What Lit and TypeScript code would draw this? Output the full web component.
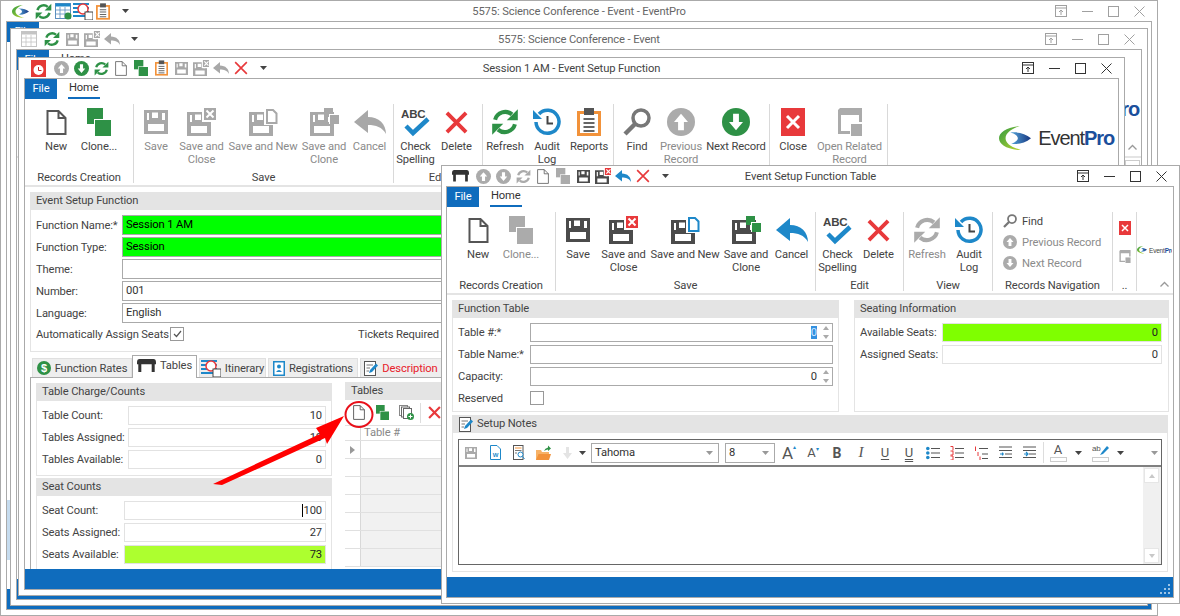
import { LitElement, html, css, svg } from 'lit';
import { customElement } from 'lit/decorators.js';

// palette used by the icons
const DARK = '#4b4b4b';
const GRAY = '#a8a8a8';
const GREEN = '#2e9146';
const BLUE = '#1e88c9';
const RED = '#e8393b';
const ORANGE = '#f2923a';

const ic = (w: number, h: number, vb: string, body: unknown) =>
  html`<svg class="ic" width=${w} height=${h} viewBox=${vb}>${body}</svg>`;

const floppyBody = (c: string) =>
  svg`<path fill=${c} fill-rule="evenodd" d="M0 0H24V24H0Z M3 3H5V10H3Z M8 2.500H14V8H8Z M18 3H21V10H18Z M4 14H20V21H4Z"/>`;

const floppy = (s: number, c: string) => ic(s, s, '0 0 24 24', floppyBody(c));

const saveClose = (s: number, c: string, mark: string) =>
  ic((s * 29) / 24, (s * 28) / 24, '0 0 29 28', svg`
    <g transform="translate(0 4)">${floppyBody(c)}</g>
    <rect x="15" y="0" width="14" height="14" fill="#fff"/>
    <rect x="17" y="0" width="12" height="12" fill=${mark}/>
    <path d="M19.500 2.500l7 7m0-7l-7 7" stroke="#fff" stroke-width="2"/>`);

const saveNew = (s: number, c: string, mark: string) =>
  ic((s * 29) / 24, (s * 28) / 24, '0 0 29 28', svg`
    <g transform="translate(0 4)">${floppyBody(c)}</g>
    <rect x="15" y="0" width="14" height="17" fill="#fff"/>
    <path d="M18 2H24L27.500 5.500V15H18Z" fill="#fff" stroke=${mark} stroke-width="2"/>`);

const saveClone = (s: number, c: string, mark: string) =>
  ic((s * 29) / 24, (s * 28) / 24, '0 0 29 28', svg`
    <g transform="translate(0 4)">${floppyBody(c)}</g>
    <rect x="14" y="0" width="9" height="9" fill=${mark}/>
    <rect x="19" y="6" width="10" height="10" fill="#fff"/>
    <rect x="20" y="7" width="9" height="9" fill=${mark}/>`);

const doc = (w: number, h: number, c: string, sw = 2) =>
  ic(w, h, '0 0 20 25', svg`<path d="M1 1H12L19 8V24H1Z M12 1V8H19" fill="#fff" stroke=${c} stroke-width=${sw}/>`);

const clone = (s: number, c: string) =>
  ic(s, (s * 28) / 24, '0 0 24 28', svg`
    <rect x="0" y="0" width="16" height="16" fill=${c}/>
    <rect x="7" y="11" width="17" height="17" fill="#fff"/>
    <rect x="8" y="12" width="16" height="16" fill=${c}/>`);

const undo = (w: number, c: string) =>
  ic(w, (w * 24) / 32, '0 0 32 24', svg`<path fill=${c} d="M0 12L14 0V7C25 7 32 14 32 24C28 17 22 15 14 15V23Z"/>`);

const cross = (s: number, c: string, sw = 4) =>
  ic(s, s, '0 0 24 24', svg`<path d="M2 2L22 22M22 2L2 22" stroke=${c} stroke-width=${sw} fill="none"/>`);

const check = (s: number) =>
  ic(s, s, '0 0 30 30', svg`
    <text x="0" y="11" font-family="Liberation Sans, sans-serif" font-weight="700" font-size="11.500" fill="#444">ABC</text>
    <path d="M5 19L12 26L27 12" stroke=${BLUE} stroke-width="4.500" fill="none"/>`);

const refresh = (s: number, c: string, c2 = c) =>
  ic(s, s, '0 0 24 24', svg`
    <path d="M3.500 10A9 9 0 0 1 18 5.500" fill="none" stroke=${c} stroke-width="3.500"/>
    <path d="M23 1V10.500H13.500Z" fill=${c}/>
    <path d="M20.500 14A9 9 0 0 1 6 18.500" fill="none" stroke=${c2} stroke-width="3.500"/>
    <path d="M1 23V13.500H10.500Z" fill=${c2}/>`);

const audit = (s: number) =>
  ic(s, s, '0 0 28 28', svg`
    <path d="M6 6A11.500 11.500 0 1 1 3 14" fill="none" stroke=${BLUE} stroke-width="3.500"/>
    <path d="M0 2V11H9Z" fill=${BLUE}/>
    <path d="M14.500 8V15.500H20" fill="none" stroke="#444" stroke-width="2"/>`);

const clipboard = (w: number, h: number) =>
  ic(w, h, '0 0 24 28', svg`
    <rect x="1.500" y="4.500" width="21" height="22" fill="#fff" stroke=${ORANGE} stroke-width="3"/>
    <rect x="7" y="0" width="10" height="7" fill="#555"/>
    <path d="M6.500 11H17.500M6.500 15H17.500M6.500 19H17.500M6.500 23H17.500" stroke="#666" stroke-width="1.800"/>`);

const find = (s: number, c: string) =>
  ic(s, s, '0 0 28 28', svg`
    <circle cx="18" cy="10" r="8" fill="none" stroke=${c} stroke-width="3.500"/>
    <path d="M12 16L2 26" stroke=${c} stroke-width="4.500"/>`);

const arrowDot = (s: number, c: string, down: boolean) =>
  ic(s, s, '0 0 24 24', svg`
    <circle cx="12" cy="12" r="12" fill=${c}/>
    <path transform=${down ? 'rotate(180 12 12)' : ''} d="M12 5L18 12H14.500V19H9.500V12H6Z" fill="#fff"/>`);

const closeBox = (w: number, h: number) =>
  ic(w, h, '0 0 24 28', svg`
    <rect width="24" height="28" fill=${RED}/>
    <path d="M6 8L18 20M18 8L6 20" stroke="#fff" stroke-width="3"/>`);

const related = (w: number, h: number, c: string) =>
  ic(w, h, '0 0 24 28', svg`
    <path d="M1.500 1.500H22.500V14 M1.500 1.500V24.500H12" fill="none" stroke=${c} stroke-width="3"/>
    <rect x="1" y="1" width="22" height="6" fill=${c}/>
    <rect x="13" y="16" width="11" height="12" fill=${c}/>`);

const table = (w: number, c: string) =>
  ic(w, (w * 15) / 22, '0 0 22 15', svg`
    <path d="M3 0H19Q22 0 22 4V6H0V4Q0 0 3 0Z M1.500 6H5V15H1.500Z M17 6H20.500V15H17Z" fill=${c}/>`);

const logoMark = (w: number, id: string) =>
  ic(w, (w * 26) / 34, '0 0 34 26', svg`
    <defs>
      <linearGradient id="g${id}" x1="0" x2="1" y1="0" y2="1"><stop offset="0" stop-color="#2f9a42"/><stop offset="1" stop-color="#c3d82f"/></linearGradient>
      <linearGradient id="b${id}" x1="0" x2="1"><stop offset="0" stop-color="#56a8dc"/><stop offset="1" stop-color="#16357f"/></linearGradient>
    </defs>
    <path fill="url(#g${id})" d="M22 0C8 1 0 7 0 13C0 20 9 25 25 26C14 23 7 19 7 13C7 8 13 3 22 0Z"/>
    <path fill="url(#b${id})" d="M12 7C20 6 28 8 34 13C28 18 20 20 13 19C18 17 20 15 20 13C20 11 17 8 12 7Z"/>`);

const chevron = () =>
  ic(9, 6, '0 0 9 6', svg`<path d="M.5 5.500L4.500 1.500L8.500 5.500" fill="none" stroke="#999" stroke-width="1.300"/>`);

const caret = () => ic(7, 4, '0 0 7 4', svg`<path d="M0 0H7L3.500 4Z" fill="#444"/>`);

// small icons that only show up in the quick access bars, tabs and the notes toolbar
const alarm = () =>
  ic(15, 17, '0 0 15 17', svg`
    <rect width="15" height="17" fill="#e53935"/>
    <circle cx="7.500" cy="10" r="5" fill="#fff"/>
    <path d="M7.500 7V10.500H10.500" stroke="#c62828" fill="none"/>`);

const calendarGrid = (c: string, dot?: string) =>
  ic(17, 17, '0 0 17 17', svg`
    <rect x=".5" y=".5" width="15" height="15" fill="#fff" stroke=${c}/>
    <rect x=".5" y=".5" width="15" height="3" fill=${dot ? BLUE : c}/>
    <path d="M5 4V15M10 4V15M1 7H15M1 11H15" stroke=${c} stroke-width=".8"/>
    ${dot ? svg`<circle cx="13" cy="13" r="3.500" fill=${dot}/>` : null}`);

const schedule = () =>
  ic(20, 18, '0 0 20 18', svg`
    <path d="M0 2H16M0 6H16M0 10H16M0 14H16" stroke=${BLUE} stroke-width="2"/>
    <circle cx="10" cy="7" r="5" fill="#fff" stroke=${RED} stroke-width="1.500"/>
    <rect x="12" y="10" width="8" height="8" fill="#fff" stroke="#444"/>`);

const dollar = () =>
  ic(14, 14, '0 0 14 14', svg`
    <circle cx="7" cy="7" r="7" fill=${GREEN}/>
    <text x="7" y="11" text-anchor="middle" font-family="Liberation Sans, sans-serif" font-weight="700" font-size="11" fill="#fff">$</text>`);

const idCard = () =>
  ic(12, 15, '0 0 12 15', svg`
    <rect x=".75" y=".75" width="10.500" height="13.500" fill="#fff" stroke=${BLUE} stroke-width="1.500"/>
    <circle cx="6" cy="5.500" r="2" fill=${BLUE}/>
    <path d="M3 11Q6 7 9 11Z" fill=${BLUE}/>`);

const notePen = () =>
  ic(14, 15, '0 0 14 15', svg`
    <rect x=".5" y=".5" width="11" height="14" fill="#fff" stroke="#555"/>
    <path d="M2.500 4H9M2.500 7H6M2.500 10H5" stroke="#777"/>
    <path d="M5 12L6 9L12 2.500L14 4.500L8 11Z" fill=${BLUE}/>`);

const copyAdd = () =>
  ic(15, 15, '0 0 15 15', svg`
    <rect x=".5" y=".5" width="8" height="10" fill="#fff" stroke="#888"/>
    <rect x="2.500" y="2" width="8" height="10" fill="#fff" stroke="#666"/>
    <rect x="4.500" y="3.500" width="8" height="10" fill="#fff" stroke="#666"/>
    <circle cx="11.500" cy="11.500" r="3.500" fill=${GREEN}/>
    <path d="M9.500 11.500H13.500M11.500 9.500V13.500" stroke="#fff"/>`);

const wordDoc = () =>
  ic(11, 15, '0 0 11 15', svg`
    <path d="M.5 .5H7L10.500 4V14.500H.5Z" fill="#fff" stroke=${BLUE}/>
    <text x="5.500" y="11.500" text-anchor="middle" font-family="Liberation Sans, sans-serif" font-weight="700" font-size="6" fill=${BLUE}>W</text>`);

const findDoc = () =>
  ic(12, 15, '0 0 12 15', svg`
    <rect x=".5" y=".5" width="9.500" height="14" fill="#fff" stroke="#555"/>
    <path d="M2 3H8.500" stroke=${ORANGE}/>
    <path d="M2 5.500H8.500M2 8H4" stroke="#777"/>
    <circle cx="7.500" cy="9.500" r="2.500" fill="#fff" stroke=${BLUE}/>
    <path d="M9.500 11.500L11.500 14" stroke=${BLUE}/>`);

const openFolder = () =>
  ic(15, 15, '0 0 15 15', svg`
    <path d="M0 5H5L6 7H13V15H0Z" fill="#f7b267"/>
    <path d="M2.500 9H15L13 15H0Z" fill=${ORANGE}/>
    <path d="M8 6Q9 3 12 2.500V0.500L15 3.500L12 6V4.500Q10 4.500 8 6Z" fill=${GREEN}/>`);

const fontSize = (big: boolean) =>
  html`<span class="fs ${big ? 'big' : ''}">A<i>${big ? '▴' : '▾'}</i></span>`;

const list = (marks: unknown) => ic(14, 14, '0 0 14 14', marks);

const indentIcon = (mark: string) =>
  ic(13, 13, '0 0 13 13', svg`
    <path d="M0 1H13M0 4.500H13M6 8H13M0 11.500H13" stroke="#555" stroke-width="1.200"/>
    <path d=${mark} stroke=${BLUE} stroke-width="1.200" fill="none"/>`);

// ---- ribbon data ----

type Btn = { icon: unknown; lines: string[]; w: number; off?: boolean };
type Group = { label: string; w: number; pad: number; btns: Btn[] };

const recordsGroup = (cloneOff: boolean): Group => ({
  label: 'Records Creation', w: 109, pad: 10,
  btns: [
    { icon: doc(21, 25, '#555'), lines: ['New'], w: 42 },
    { icon: clone(24, cloneOff ? '#ababab' : GREEN), lines: ['Clone...'], w: 44, off: cloneOff },
  ],
});

const saveGroup = (on: boolean): Group => {
  const c = on ? DARK : GRAY;
  return {
    label: 'Save', w: 260, pad: 3,
    btns: [
      { icon: floppy(24, c), lines: ['Save'], w: 38, off: !on },
      { icon: saveClose(24, c, on ? RED : GRAY), lines: ['Save and', 'Close'], w: 53, off: !on },
      { icon: saveNew(24, c, on ? BLUE : GRAY), lines: ['Save and New'], w: 70, off: !on },
      { icon: saveClone(24, c, on ? GREEN : GRAY), lines: ['Save and', 'Clone'], w: 52, off: !on },
      { icon: undo(32, on ? BLUE : GRAY), lines: ['Cancel'], w: 39, off: !on },
    ],
  };
};

const editGroup = (w: number): Group => ({
  label: 'Edit', w, pad: 2,
  btns: [
    { icon: check(30), lines: ['Check', 'Spelling'], w: 39 },
    { icon: cross(23, RED), lines: ['Delete'], w: 43 },
  ],
});

const setupRibbon: Group[] = [
  recordsGroup(false),
  saveGroup(false),
  editGroup(89),
  {
    label: '', w: 131, pad: 1,
    btns: [
      { icon: refresh(28, GREEN), lines: ['Refresh'], w: 42 },
      { icon: audit(28), lines: ['Audit', 'Log'], w: 42 },
      { icon: clipboard(24, 28), lines: ['Reports'], w: 42 },
    ],
  },
  {
    label: '', w: 156, pad: 2,
    btns: [
      { icon: find(28, '#777'), lines: ['Find'], w: 42 },
      { icon: arrowDot(28, '#ababab', false), lines: ['Previous', 'Record'], w: 46, off: true },
      { icon: arrowDot(28, GREEN, true), lines: ['Next Record'], w: 64 },
    ],
  },
  {
    label: '', w: 118, pad: 2,
    btns: [
      { icon: closeBox(28, 28), lines: ['Close'], w: 42 },
      { icon: related(28, 28, '#ababab'), lines: ['Open Related', 'Record'], w: 71, off: true },
    ],
  },
];

const tableRibbon: Group[] = [
  recordsGroup(true),
  saveGroup(true),
  editGroup(88),
  {
    label: 'View', w: 89, pad: 2,
    btns: [
      { icon: refresh(28, '#ababab'), lines: ['Refresh'], w: 42, off: true },
      { icon: audit(28), lines: ['Audit', 'Log'], w: 42 },
    ],
  },
];

const navRows = [
  { icon: find(14, '#777'), text: 'Find', off: false },
  { icon: arrowDot(14, '#ababab', false), text: 'Previous Record', off: true },
  { icon: arrowDot(14, '#ababab', true), text: 'Next Record', off: true },
];

// ---- elements ----

@customElement('app-root')
export class AppRoot extends LitElement {
  static styles = css`
    :host {
      display: block;
      position: relative;
      width: 1180px;
      height: 616px;
      overflow: hidden;
      background: #fff;
      font-family: Roboto, "Liberation Sans", Arial, sans-serif;
      font-size: 11.200px;
      letter-spacing: -.12px;
      color: #444;
    }
    .ic { display: block; flex: none; }

    /* windows on the desktop */
    .win {
      position: absolute;
      box-sizing: border-box;
      display: flex;
      flex-direction: column;
      background: #fff;
      border: 1px solid #aaa;
    }
    .w1 { left: 0; top: 0; width: 1158px; height: 616px; }
    .w2 { left: 10px; top: 28px; width: 1138px; height: 578px; }
    .w3 { left: 18px; top: 57px; width: 1107px; height: 539px; }
    .w4 { left: 441px; top: 165px; width: 739px; height: 439px; }

    .titlebar {
      flex: none;
      height: 20px;
      display: grid;
      grid-template-columns: 1fr auto 1fr;
      align-items: center;
      color: #444;
    }
    .faded .titlebar { color: #666; }
    .qat { display: flex; align-items: center; padding-left: 9px; }
    .w2 .qat, .w4 .qat { padding-left: 8px; }
    .qat-slot { width: 20px; height: 18px; display: flex; align-items: center; justify-content: center; flex: none; }
    .qat-slot:first-child { margin-right: 3px; }
    .qat .more { width: 24px; display: flex; justify-content: center; }
    .controls { display: flex; justify-content: flex-end; align-items: center; gap: 15px; padding-right: 12px; }

    .frame {
      flex: 1;
      min-height: 0;
      margin: 0 5px 5px;
      border: 1px solid #aaa;
      display: flex;
      flex-direction: column;
      position: relative;
      background: #fff;
    }
    .w4 .frame { margin-left: 4px; }

    .tabstrip { flex: none; height: 20px; display: flex; }
    .file {
      width: 32px;
      background: #0f6cbd;
      color: #fff;
      line-height: 20px;
      text-align: center;
    }
    .home {
      margin-left: 11px;
      line-height: 17px;
      height: 18px;
      color: #333;
      border-bottom: 2px solid #0f6cbd;
      padding: 0 1px;
    }
    .w1 .home { margin-top: 6px; }

    .ribbon {
      flex: none;
      box-sizing: border-box;
      height: 88px;
      padding-top: 5px;
      border-bottom: 2px solid #e4e4e4;
      display: flex;
      position: relative;
    }
    .group {
      box-sizing: border-box;
      flex: none;
      height: 79px;
      border-right: 1px solid #d9d9d9;
      display: flex;
      flex-direction: column;
    }
    .group .btns { flex: 1; display: flex; min-height: 0; }
    .group .glabel {
      flex: none;
      height: 14px;
      line-height: 14px;
      margin-bottom: -2px;
      text-align: center;
      white-space: nowrap;
      overflow: hidden;
      color: #444;
    }
    .btn { flex: none; display: flex; flex-direction: column; align-items: center; }
    .btn .slot { height: 36px; flex: none; display: flex; align-items: center; justify-content: center; }
    .btn .txt { line-height: 13px; text-align: center; white-space: nowrap; color: #444; }
    .btn.off .txt, .navrow.off { color: #8b8b8b; }

    .navrows { flex: 1; display: flex; flex-direction: column; padding: 2px 0 0 10px; gap: 7px; }
    .navrow { display: flex; align-items: center; gap: 5px; height: 14px; white-space: nowrap; color: #444; }
    .tiny { flex: 1; display: flex; flex-direction: column; align-items: center; padding-top: 9px; gap: 15px; }

    .logo { position: absolute; right: 4px; top: 27px; display: flex; align-items: center; gap: 7px; }
    .w2 .logo { right: 2px; }
    .logo .word { font-family: "Liberation Sans", Arial, sans-serif; font-size: 20px; letter-spacing: -1.100px; line-height: 22px; color: #333; white-space: nowrap; }
    .logo .word b { color: #1b4f9c; }
    .logo-mini { flex: none; width: 35px; overflow: hidden; padding-top: 32px; display: flex; align-items: center; gap: 2px; height: 12px; }
    .logo-mini .word { font-family: "Liberation Sans", Arial, sans-serif; font-size: 6.500px; letter-spacing: -.2px; white-space: nowrap; color: #444; }
    .logo-mini .word b { color: #1b4f9c; }
    .collapse { position: absolute; right: 4px; top: 74px; }

    .content { flex: 1; min-height: 0; overflow: hidden; position: relative; }
    .status { flex: none; height: 20px; background: #0f6cbd; position: relative; }
    .grip { position: absolute; right: 2px; bottom: 2px; }

    /* panels and fields */
    .panel { box-sizing: border-box; border: 1px solid #e4e4e4; display: flex; flex-direction: column; }
    .phead {
      flex: none;
      height: 18px;
      margin: -1px -1px 0;
      background: #e4e4e4;
      padding-left: 6px;
      line-height: 18px;
      color: #444;
      display: flex;
      align-items: center;
      gap: 5px;
    }
    .fields { padding: 5px 5px 0; display: flex; flex-direction: column; gap: 3px; }
    .row { display: flex; height: 19px; align-items: center; }
    .lbl { flex: none; white-space: nowrap; color: #444; }
    .inp {
      flex: 1;
      min-width: 0;
      box-sizing: border-box;
      height: 19px;
      line-height: 17px;
      padding: 0 3px;
      border: 1px solid #aaa;
      background: #fff;
      color: #333;
      white-space: nowrap;
      overflow: hidden;
      position: relative;
    }
    .inp.ro { border-color: #e2e2e2; }
    .inp.num { text-align: right; padding-right: 3px; }
    .inp.spin { padding-right: 15px; }
    .inp.lime { background: #00ff00; color: #000; }
    .inp.chart { background: #7fff00; color: #222; border-color: #e2e2e2; }
    .inp.yellow { background: #adff2f; color: #222; border-color: #e2e2e2; }
    .sel { background: #3390e0; color: #cfe6ff; }
    .cursor { border-left: 1px solid #000; }
    .spinner { position: absolute; right: 3px; top: 2px; display: flex; flex-direction: column; gap: 5px; }
    .tri-u, .tri-d { width: 0; height: 0; border-left: 3px solid transparent; border-right: 3px solid transparent; }
    .tri-u { border-bottom: 4px solid #aaa; }
    .tri-d { border-top: 4px solid #aaa; }
    .box { flex: none; box-sizing: border-box; width: 14px; height: 14px; border: 1px solid #999; display: flex; align-items: center; justify-content: center; }

    /* session window content */
    .session { padding: 5px 5px 0; }
    .p-func { height: 160px; }
    .p-func .fields { padding-top: 5px; }
    .p-func .row { height: 20px; margin-bottom: -1px; }
    .p-func .inp { height: 20px; line-height: 18px; }
    .p-func .row .lbl { width: 86px; }
    .auto { display: flex; align-items: center; height: 14px; margin-top: 2px; }
    .auto .lbl { width: 127px; }
    .auto .box { margin-left: 7px; }
    .auto .tickets { margin-left: 174px; width: auto; }
    .tabs { display: flex; height: 22px; margin-top: 3px; padding-left: 2px; align-items: flex-end; gap: 2px; position: relative; }
    .tab {
      box-sizing: border-box;
      height: 19px;
      display: flex;
      align-items: center;
      justify-content: center;
      gap: 4px;
      background: #eeeeee;
      border: 1px solid #e0e0e0;
      border-bottom: 0;
      white-space: nowrap;
      color: #444;
    }
    .tab.active { height: 23px; background: #fff; border-color: #aaa; margin: 0 0 -1px -2px; position: relative; z-index: 1; padding-bottom: 3px; }
    .tab.red { color: #e8202a; }
    .tabbody { border: 1px solid #aaa; border-right: 0; padding: 5px 0 0 5px; display: flex; gap: 14px; height: 300px; }
    .left { flex: none; width: 296px; display: flex; flex-direction: column; gap: 2px; }
    .p-charge { height: 93px; }
    .p-seat { height: 100px; }
    .gridpane { flex: none; width: 400px; }
    .tools { height: 25px; display: flex; align-items: center; padding-left: 7px; }
    .tools .sep { width: 1px; height: 20px; background: #ddd; margin: 0 7px 0 6px; }
    .sp11 { width: 11px; flex: none; }
    .sp10 { width: 10px; flex: none; }
    .ghead { height: 14px; display: flex; border-top: 1px solid #e0e0e0; border-bottom: 1px solid #e0e0e0; margin-left: -1px; }
    .ghead .ind, .grow .ind { width: 15px; flex: none; border-right: 1px solid #d8d8d8; display: flex; align-items: center; justify-content: center; }
    .ghead .cap { padding-left: 3px; color: #888; line-height: 13px; }
    .grow { display: flex; height: 18px; box-sizing: border-box; border-bottom: 1px solid #e0e0e0; margin-left: -1px; }
    .grow .cell { flex: 1; background: #f1f1f1; }
    .grow.first .cell { background: #fff; }
    .grow .ind { background: #fff; }

    /* function table window content */
    .tablebody { padding: 5px 5px 0; display: flex; flex-direction: column; gap: 3px; }
    .top { display: flex; gap: 15px; height: 112px; }
    .p-table { flex: none; width: 387px; }
    .p-table .lbl { width: 72px; }
    .p-seating { flex: none; width: 315px; }
    .p-seating .lbl { width: 82px; }
    .p-seating .fields { padding-right: 6px; }
    .reserved { display: flex; align-items: center; height: 14px; margin-top: 2px; }
    .reserved .lbl { width: 72px; }
    .p-notes { height: 157px; padding: 0 5px 6px; }
    .p-notes .phead { margin: -1px -6px 0; gap: 4px; padding-left: 7px; }
    .editor { flex: 1; margin-top: 6px; border: 1px solid #666; display: flex; flex-direction: column; min-height: 0; }
    .toolbar { flex: none; height: 25px; display: flex; align-items: center; }
    .tool { flex: none; width: 24px; display: flex; align-items: center; justify-content: center; color: #555; font-size: 13px; }
    .tool.b { font-weight: 700; font-size: 14px; }
    .tool.i { font-style: italic; font-family: "Liberation Serif", serif; font-size: 15px; }
    .tool.u { text-decoration: underline; text-underline-offset: 2px; }
    .tool.uu { text-decoration: underline double; text-underline-offset: 2px; }
    .mini { flex: none; width: 6px; display: flex; justify-content: center; }
    .mini.wide { margin: 0 6px; }
    .combo {
      flex: none;
      box-sizing: border-box;
      height: 20px;
      border: 1px solid #aaa;
      display: flex;
      align-items: center;
      justify-content: space-between;
      padding: 0 5px 0 3px;
      color: #333;
    }
    .combo.font { width: 128px; margin-left: 6px; }
    .combo.size { width: 50px; margin: 0 2px 0 6px; }
    .tbsep { flex: none; width: 1px; height: 21px; background: #ddd; margin: 0 3px 0 2px; }
    .colorchip { display: flex; flex-direction: column; align-items: center; width: 22px; flex: none; line-height: 12px; color: #555; font-size: 13px; }
    .colorchip.hl { margin-left: 2px; }
    .colorchip i { display: block; width: 15px; height: 3px; border: 1px solid #ccc; margin-top: 1px; }
    .end { margin-left: auto; margin-right: 4px; }
    .editarea { flex: 1; border-top: 2px solid #808080; display: flex; justify-content: flex-end; min-height: 0; }
    .vscroll { width: 18px; background: #f0f0f0; display: flex; flex-direction: column; justify-content: space-between; padding: 1px 0; }
    .vscroll div { box-sizing: border-box; width: 15px; height: 15px; margin-left: 1px; background: #fff; border: 1px solid #e6e6e6; display: flex; align-items: center; justify-content: center; }
    .vscroll .tri-u { border-bottom-color: #c8c8c8; }
    .vscroll .tri-d { border-top-color: #c8c8c8; }
    .fs { display: flex; align-items: flex-start; font-size: 13px; color: #555; }
    .fs.big { font-size: 17px; }
    .fs i { font-size: 6px; font-style: normal; line-height: 8px; color: #1e88c9; }

    /* things lying over the windows */
    .markup { position: absolute; left: 0; top: 0; pointer-events: none; }
    .edge { position: absolute; background: #dcdcdc; }
    .edge.scroll { left: 1148px; top: 129px; width: 3px; height: 24px; }
    .edge.nav { left: 7px; top: 500px; width: 3px; height: 60px; background: #c6dcef; }
    .stub { position: absolute; left: 1125px; top: 160px; width: 15px; height: 12px; border: 1px solid #ccc; box-sizing: border-box; }
  `;

  private controls(c: string) {
    return html`<div class="controls">
      ${ic(12, 12, '0 0 12 12', svg`<rect x=".5" y=".5" width="11" height="11" fill="none" stroke=${c}/><path d="M1 3H11M6 10V5M4 7L6 5L8 7" stroke=${c} fill="none"/>`)}
      ${ic(11, 12, '0 0 11 12', svg`<path d="M0 6.500H11" stroke=${c}/>`)}
      ${ic(11, 11, '0 0 11 11', svg`<rect x=".5" y=".5" width="10" height="10" fill="none" stroke=${c}/>`)}
      ${ic(11, 11, '0 0 11 11', svg`<path d="M.5 .5L10.500 10.500M10.500 .5L.5 10.500" stroke=${c}/>`)}
    </div>`;
  }

  private titlebar(icons: unknown[], title: string, c: string) {
    return html`<div class="titlebar">
      <div class="qat">
        ${icons.map(i => html`<div class="qat-slot">${i}</div>`)}
        <div class="more">${caret()}</div>
      </div>
      <div>${title}</div>
      ${this.controls(c)}
    </div>`;
  }

  private tabstrip() {
    return html`<div class="tabstrip"><div class="file">File</div><div class="home">Home</div></div>`;
  }

  private group(g: Group) {
    return html`<div class="group" style="width:${g.w}px">
      <div class="btns" style="padding-left:${g.pad}px">
        ${g.btns.map(b => html`<div class="btn ${b.off ? 'off' : ''}" style="width:${b.w}px">
          <div class="slot">${b.icon}</div>
          ${b.lines.map(l => html`<div class="txt">${l}</div>`)}
        </div>`)}
      </div>
      <div class="glabel">${g.label}</div>
    </div>`;
  }

  private logo(id: string) {
    return html`<div class="logo">${logoMark(32, id)}<div class="word">Event<b>Pro</b></div></div>`;
  }

  private row(label: string, value: string, cls = '') {
    return html`<div class="row">
      <div class="lbl">${label}</div>
      <div class="inp ${cls}">${value}</div>
    </div>`;
  }

  private spinRow(label: string, value: unknown) {
    return html`<div class="row">
      <div class="lbl">${label}</div>
      <div class="inp num spin">${value}
        <div class="spinner"><div class="tri-u"></div><div class="tri-d"></div></div>
      </div>
    </div>`;
  }

  private countRow(label: string, value: unknown, width: number, cls = 'ro') {
    return html`<div class="row"><div class="lbl" style="width:${width}px">${label}</div><div class="inp num ${cls}">${value}</div></div>`;
  }

  private sessionContent() {
    return html`<div class="content session">
      <div class="panel p-func">
        <div class="phead">Event Setup Function</div>
        <div class="fields">
          ${this.row('Function Name:*', 'Session 1 AM', 'lime')}
          ${this.row('Function Type:', 'Session', 'lime')}
          ${this.row('Theme:', '')}
          ${this.row('Number:', '001')}
          ${this.row('Language:', 'English')}
          <div class="auto">
            <div class="lbl">Automatically Assign Seats</div>
            <div class="box">${ic(9, 8, '0 0 9 8', svg`<path d="M1 4L3.500 6.500L8 1" fill="none" stroke="#555" stroke-width="1.200"/>`)}</div>
            <div class="lbl tickets">Tickets Required</div>
          </div>
        </div>
      </div>
      <div class="tabs">
        <div class="tab" style="width:100px">${dollar()}Function Rates</div>
        <div class="tab active" style="width:65px">${table(19, '#333')}Tables</div>
        <div class="tab" style="width:67px">${schedule()}Itinerary</div>
        <div class="tab" style="width:90px">${idCard()}Registrations</div>
        <div class="tab red" style="width:82px">${notePen()}Description</div>
      </div>
      <div class="tabbody">
        <div class="left">
          <div class="panel p-charge">
            <div class="phead">Table Charge/Counts</div>
            <div class="fields">
              ${this.countRow('Table Count:', '10', 86)}
              ${this.countRow('Tables Assigned:', '10', 86)}
              ${this.countRow('Tables Available:', '0', 86)}
            </div>
          </div>
          <div class="panel p-seat">
            <div class="phead">Seat Counts</div>
            <div class="fields">
              ${this.countRow('Seat Count:', html`<span class="cursor"></span>100`, 82)}
              ${this.countRow('Seats Assigned:', '27', 82)}
              ${this.countRow('Seats Available:', '73', 82, 'yellow')}
            </div>
          </div>
        </div>
        <div class="gridpane">
          <div class="phead">Tables</div>
          <div class="tools">
            ${doc(12, 15, '#555', 1.500)}
            <div class="sp11"></div>
            ${clone(13, GREEN)}
            <div class="sp10"></div>
            ${copyAdd()}
            <div class="sep"></div>
            ${cross(13, RED)}
          </div>
          <div class="ghead"><div class="ind"></div><div class="cap">Table #</div></div>
          ${[0, 1, 2, 3, 4, 5, 6].map(i => html`<div class="grow ${i === 0 ? 'first' : ''}">
            <div class="ind">${i === 0 ? ic(5, 8, '0 0 5 8', svg`<path d="M0 0L5 4L0 8Z" fill="#999"/>`) : null}</div>
            <div class="cell"></div>
          </div>`)}
        </div>
      </div>
    </div>`;
  }

  private comboCaret() {
    return ic(7, 4, '0 0 7 4', svg`<path d="M0 0H7L3.500 4Z" fill="#999"/>`);
  }

  private notesToolbar() {
    return html`<div class="toolbar">
      <div class="tool">${floppy(12, '#aaa')}</div>
      <div class="tool">${wordDoc()}</div>
      <div class="tool">${findDoc()}</div>
      <div class="tool">${openFolder()}</div>
      <div class="tool">${ic(9, 12, '0 0 9 12', svg`<path d="M3 0H6V6H9L4.500 12L0 6H3Z" fill="#e4e4e4"/>`)}</div>
      <div class="mini">${caret()}</div>
      <div class="combo font"><span>Tahoma</span>${this.comboCaret()}</div>
      <div class="combo size"><span>8</span>${this.comboCaret()}</div>
      <div class="tool">${fontSize(true)}</div>
      <div class="tool">${fontSize(false)}</div>
      <div class="tool b">B</div>
      <div class="tool i">I</div>
      <div class="tool u">U</div>
      <div class="tool uu">U</div>
      <div class="tool">${list(svg`
        <path d="M5 2.500H14M5 7H14M5 11.500H14" stroke="#555" stroke-width="1.200"/>
        <circle cx="1.800" cy="2.500" r="1.800" fill=${BLUE}/><circle cx="1.800" cy="7" r="1.800" fill=${BLUE}/><circle cx="1.800" cy="11.500" r="1.800" fill=${BLUE}/>`)}</div>
      <div class="tool">${list(svg`
        <path d="M5 2.500H14M5 7H14M5 11.500H14" stroke="#555" stroke-width="1.200"/>
        <path d="M.5 .5H3V4.500M.5 5H3V9H.5M.5 10H3V14H.5" fill="none" stroke=${RED}/>`)}</div>
      <div class="tool">${list(svg`
        <path d="M5 2.500H14M8 8H14M8 12.500H14" stroke="#555" stroke-width="1.200"/>
        <path d="M1.500 .5V5M4 6V10M6 10.500V14" fill="none" stroke=${RED}/>`)}</div>
      <div class="tool">${indentIcon('M1 8H5M3.500 6.500V9.500')}</div>
      <div class="tool">${indentIcon('M1 8H5M3 6L5 8L3 10')}</div>
      <div class="tbsep"></div>
      <div class="colorchip">A<i></i></div>
      <div class="mini wide">${caret()}</div>
      <div class="colorchip hl">
        ${ic(17, 12, '0 0 17 12', svg`
          <text x="0" y="7" font-family="Liberation Sans, sans-serif" font-size="8" fill="#555">ab</text>
          <path d="M8 11L10 8L15 2L17 4L11 10Z" fill=${BLUE}/>`)}
        <i></i>
      </div>
      <div class="mini wide">${caret()}</div>
      <div class="mini end">${this.comboCaret()}</div>
    </div>`;
  }

  private tableContent() {
    return html`<div class="content tablebody">
      <div class="top">
        <div class="panel p-table">
          <div class="phead">Function Table</div>
          <div class="fields">
            ${this.spinRow('Table #:*', html`<span class="sel">0</span>`)}
            ${this.row('Table Name:*', '')}
            ${this.spinRow('Capacity:', '0')}
            <div class="reserved"><div class="lbl">Reserved</div><div class="box"></div></div>
          </div>
        </div>
        <div class="panel p-seating">
          <div class="phead">Seating Information</div>
          <div class="fields">
            ${this.row('Available Seats:', '0', 'num chart')}
            ${this.row('Assigned Seats:', '0', 'num ro')}
          </div>
        </div>
      </div>
      <div class="panel p-notes">
        <div class="phead">${notePen()}Setup Notes</div>
        <div class="editor">
          ${this.notesToolbar()}
          <div class="editarea">
            <div class="vscroll">
              <div><span class="tri-u"></span></div>
              <div><span class="tri-d"></span></div>
            </div>
          </div>
        </div>
      </div>
    </div>`;
  }

  render() {
    const grip = ic(12, 12, '0 0 12 12', svg`<path d="M9 1h2v2H9zM5 5h2v2H5zM9 5h2v2H9zM1 9h2v2H1zM5 9h2v2H5zM9 9h2v2H9z" fill="#9cc4e6"/>`);
    return html`
      <div class="edge scroll"></div>
      <div class="win w1 faded">
        ${this.titlebar([logoMark(17, 'q'), refresh(17, GREEN), calendarGrid('#5a8fbf', GREEN), schedule(), clipboard(14, 17)], '5575: Science Conference - Event - EventPro', '#a0a0a0')}
        <div class="frame">
          ${this.tabstrip()}
          <div class="content"></div>
          <div class="status"></div>
        </div>
      </div>
      <div class="edge nav"></div>
      <div class="win w2 faded">
        ${this.titlebar([calendarGrid('#c4c4c4'), refresh(16, GREEN), floppy(13, GRAY), saveClose(14, GRAY, GRAY), undo(16, GRAY)], '5575: Science Conference - Event', '#a0a0a0')}
        <div class="frame">
          ${this.tabstrip()}
          <div class="ribbon">${this.logo('a')}<div class="collapse">${chevron()}</div></div>
          <div class="content"></div>
          <div class="status"></div>
        </div>
      </div>
      <div class="stub"></div>
      <div class="win w3">
        ${this.titlebar([alarm(), arrowDot(15, '#ababab', false), arrowDot(15, GREEN, true), refresh(15, GREEN), doc(12, 15, '#555', 1.300), clone(14, GREEN), clipboard(13, 16), floppy(13, GRAY), saveClose(14, GRAY, GRAY), undo(16, GRAY), cross(14, RED, 2.800)], 'Session 1 AM - Event Setup Function', '#333')}
        <div class="frame">
          ${this.tabstrip()}
          <div class="ribbon">
            ${setupRibbon.map(g => this.group(g))}
            ${this.logo('b')}
            <div class="collapse">${chevron()}</div>
          </div>
          ${this.sessionContent()}
          <div class="status"></div>
        </div>
      </div>
      <svg class="markup" width="1180" height="616" viewBox="0 0 1180 616">
        <polygon fill="#f00" points="344,416 316,428 320,434 213,484 222,485 325,438 327,444"/>
        <ellipse cx="359" cy="414.500" rx="13.500" ry="12.500" fill="none" stroke="#e8101a" stroke-width="2"/>
      </svg>
      <div class="win w4">
        ${this.titlebar([table(17, '#333'), arrowDot(15, '#ababab', false), arrowDot(15, '#ababab', true), refresh(15, '#ababab'), doc(12, 15, '#555', 1.300), clone(14, '#ababab'), floppy(13, DARK), saveClose(14, DARK, RED), undo(16, BLUE), cross(14, RED, 2.800)], 'Event Setup Function Table', '#333')}
        <div class="frame">
          ${this.tabstrip()}
          <div class="ribbon">
            ${tableRibbon.map(g => this.group(g))}
            <div class="group" style="width:120px">
              <div class="btns"><div class="navrows">
                ${navRows.map(r => html`<div class="navrow ${r.off ? 'off' : ''}">${r.icon}${r.text}</div>`)}
              </div></div>
              <div class="glabel">Records Navigation</div>
            </div>
            <div class="group" style="width:24px">
              <div class="btns"><div class="tiny">
                ${closeBox(14, 14)}
                ${related(14, 13, '#ababab')}
              </div></div>
              <div class="glabel">..</div>
            </div>
            <div class="logo-mini">${logoMark(10, 'c')}<div class="word">Event<b>Pro</b></div></div>
            <div class="collapse">${chevron()}</div>
          </div>
          ${this.tableContent()}
          <div class="status"><div class="grip">${grip}</div></div>
        </div>
      </div>
    `;
  }
}
